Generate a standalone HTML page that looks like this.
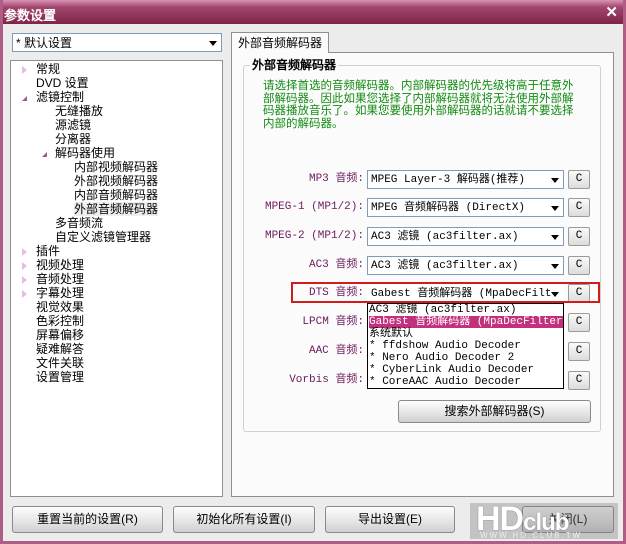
<!DOCTYPE html><html><head><meta charset="utf-8"><style>
*{box-sizing:border-box;margin:0;padding:0}
body{width:626px;height:544px;overflow:hidden;background:#ececec;font:11px "Liberation Mono","WenQuanYi Zen Hei",monospace;color:#000;position:relative}
.frame{position:absolute;left:0;top:0;width:626px;height:544px;border:3px solid #b05d86;border-top:none;pointer-events:none;z-index:5}
.title{position:absolute;left:0;top:0;width:626px;height:24px;background:linear-gradient(#d993b3,#a2466f 30%,#7e2447);color:#fff;font:bold 13px "Liberation Sans","WenQuanYi Zen Hei",sans-serif;padding:5px 4px}
.x{position:absolute;right:8px;top:3px;color:#fff;font:bold 15px "Liberation Sans",sans-serif}
.a{position:absolute}
.box{position:absolute;background:#fff;border:1px solid #8f8f8f}
.combo{position:absolute;background:#fff;border:1px solid #7f9db9;height:19px;padding:3px 3px;white-space:nowrap;overflow:hidden;line-height:12px}
.arr{position:absolute;right:4px;top:7px;width:0;height:0;border-left:4px solid transparent;border-right:4px solid transparent;border-top:5px solid #000}
.cb{position:absolute;width:22px;height:19px;border:1px solid #9a9a9a;border-radius:2px;background:linear-gradient(#fafafa,#dcdcdc);text-align:center;line-height:17px;font-size:11px}
.lbl{position:absolute;right:262px;color:#6d1c5c;white-space:nowrap;line-height:19px;height:19px}
.btn{position:absolute;height:27px;border:1px solid #8a8a8a;border-radius:3px;background:linear-gradient(#fdfdfd,#e4e4e4 60%,#cfcfcf);text-align:center;line-height:25px;font-family:"WenQuanYi Zen Hei",sans-serif;font-size:12px}
.t{position:absolute;white-space:nowrap;font-family:"WenQuanYi Zen Hei",sans-serif;font-size:12px;line-height:14px}
.tri{position:absolute;width:0;height:0;border-top:4px solid transparent;border-bottom:4px solid transparent;border-left:5px solid #e8bde0}
.tri2{position:absolute;width:0;height:0;border-left:5px solid transparent;border-bottom:5px solid #a5558f}
</style></head><body><div class="frame"></div>
<div class="title">参数设置<span class="x">✕</span></div>
<div class="combo" style="left:12px;top:33px;width:210px;font-family:'WenQuanYi Zen Hei',sans-serif;font-size:12px">* 默认设置<span class="arr"></span></div>
<div class="box" style="left:10px;top:60px;width:213px;height:437px">
<div class="tri" style="left:11px;top:5px"></div><div class="t" style="left:25px;top:1px">常规</div>
<div class="t" style="left:25px;top:15px">DVD 设置</div>
<div class="tri2" style="left:11px;top:35px"></div><div class="t" style="left:25px;top:29px">滤镜控制</div>
<div class="t" style="left:44px;top:43px">无缝播放</div>
<div class="t" style="left:44px;top:57px">源滤镜</div>
<div class="t" style="left:44px;top:71px">分离器</div>
<div class="tri2" style="left:31px;top:91px"></div><div class="t" style="left:44px;top:85px">解码器使用</div>
<div class="t" style="left:63px;top:99px">内部视频解码器</div>
<div class="t" style="left:63px;top:113px">外部视频解码器</div>
<div class="t" style="left:63px;top:127px">内部音频解码器</div>
<div class="t" style="left:63px;top:141px;background:#eee">外部音频解码器</div>
<div class="t" style="left:44px;top:155px">多音频流</div>
<div class="t" style="left:44px;top:169px">自定义滤镜管理器</div>
<div class="tri" style="left:11px;top:187px"></div><div class="t" style="left:25px;top:183px">插件</div>
<div class="tri" style="left:11px;top:201px"></div><div class="t" style="left:25px;top:197px">视频处理</div>
<div class="tri" style="left:11px;top:215px"></div><div class="t" style="left:25px;top:211px">音频处理</div>
<div class="tri" style="left:11px;top:229px"></div><div class="t" style="left:25px;top:225px">字幕处理</div>
<div class="t" style="left:25px;top:239px">视觉效果</div>
<div class="t" style="left:25px;top:253px">色彩控制</div>
<div class="t" style="left:25px;top:267px">屏幕偏移</div>
<div class="t" style="left:25px;top:281px">疑难解答</div>
<div class="t" style="left:25px;top:295px">文件关联</div>
<div class="t" style="left:25px;top:309px">设置管理</div>
</div>
<div class="box" style="left:231px;top:52px;width:383px;height:445px;background:#fbfbfb"></div>
<div class="box" style="left:231px;top:32px;width:98px;height:21px;border-bottom:none;background:#fbfbfb;padding:3px 6px" ><span class="t" style="position:static">外部音频解码器</span></div>
<div class="a" style="left:243px;top:65px;width:358px;height:367px;border:1px solid #d0d0d0;border-radius:3px"></div>
<div class="t" style="left:250px;top:58px;background:#fbfbfb;font-weight:bold;padding:0 2px">外部音频解码器</div>
<div class="t" style="left:263px;top:80px;color:#118a11;line-height:12.5px;font-size:11.5px">请选择首选的音频解码器。内部解码器的优先级将高于任意外<br>部解码器。因此如果您选择了内部解码器就将无法使用外部解<br>码器播放音乐了。如果您要使用外部解码器的话就请不要选择<br>内部的解码器。</div>
<div class="lbl" style="top:170px">MP3 音频:</div>
<div class="combo" style="left:367px;top:170px;width:197px">MPEG Layer-3 解码器(推荐)<span class="arr"></span></div><div class="cb" style="left:568px;top:170px">C</div>
<div class="lbl" style="top:198px">MPEG-1 (MP1/2):</div>
<div class="combo" style="left:367px;top:198px;width:197px">MPEG 音频解码器 (DirectX)<span class="arr"></span></div><div class="cb" style="left:568px;top:198px">C</div>
<div class="lbl" style="top:227px">MPEG-2 (MP1/2):</div>
<div class="combo" style="left:367px;top:227px;width:197px">AC3 滤镜 (ac3filter.ax)<span class="arr"></span></div><div class="cb" style="left:568px;top:227px">C</div>
<div class="lbl" style="top:256px">AC3 音频:</div>
<div class="combo" style="left:367px;top:256px;width:197px">AC3 滤镜 (ac3filter.ax)<span class="arr"></span></div><div class="cb" style="left:568px;top:256px">C</div>
<div class="lbl" style="top:284px">DTS 音频:</div>
<div class="combo" style="left:367px;top:284px;width:197px;border-color:#fff">Gabest 音频解码器 (MpaDecFilt<span class="arr" style="background:#fff"></span></div><div class="cb" style="left:568px;top:284px">C</div>
<div class="a" style="left:291px;top:282px;width:309px;height:21px;border:2px solid #d21c1c"></div>
<div class="lbl" style="top:313px">LPCM 音频:</div><div class="cb" style="left:568px;top:313px">C</div>
<div class="lbl" style="top:342px">AAC 音频:</div><div class="cb" style="left:568px;top:342px">C</div>
<div class="lbl" style="top:371px">Vorbis 音频:</div><div class="cb" style="left:568px;top:371px">C</div>
<div class="a" style="left:367px;top:303px;width:197px;height:86px;background:#fff;border:1px solid #000;line-height:12px;white-space:nowrap;overflow:hidden;padding-left:1px">AC3 滤镜 (ac3filter.ax)<br><span style="background:#c2307e;color:#fff;display:block">Gabest 音频解码器 (MpaDecFilter.</span>系统默认<br>* ffdshow Audio Decoder<br>* Nero Audio Decoder 2<br>* CyberLink Audio Decoder<br>* CoreAAC Audio Decoder</div>
<div class="btn" style="left:398px;top:400px;width:193px;height:23px;line-height:21px">搜索外部解码器(S)</div>
<div class="btn" style="left:12px;top:506px;width:151px">重置当前的设置(R)</div>
<div class="btn" style="left:173px;top:506px;width:142px">初始化所有设置(I)</div>
<div class="btn" style="left:325px;top:506px;width:130px">导出设置(E)</div>
<div class="btn" style="left:522px;top:506px;width:92px">关闭(L)</div>
<div class="a" style="left:470px;top:503px;width:148px;height:36px;background:rgba(120,120,120,.35)"></div>
<div class="a" style="left:476px;top:502px;font:bold 34px 'Liberation Sans',sans-serif;color:#fff;letter-spacing:-1px;text-shadow:0 0 1px #555;line-height:34px">HD<span style="font-size:24px">club</span></div>
<div class="a" style="left:480px;top:531px;font:8px 'Liberation Sans',sans-serif;color:#eee;letter-spacing:2px">WWW.HD.CLUB.TW</div>
</body></html>
